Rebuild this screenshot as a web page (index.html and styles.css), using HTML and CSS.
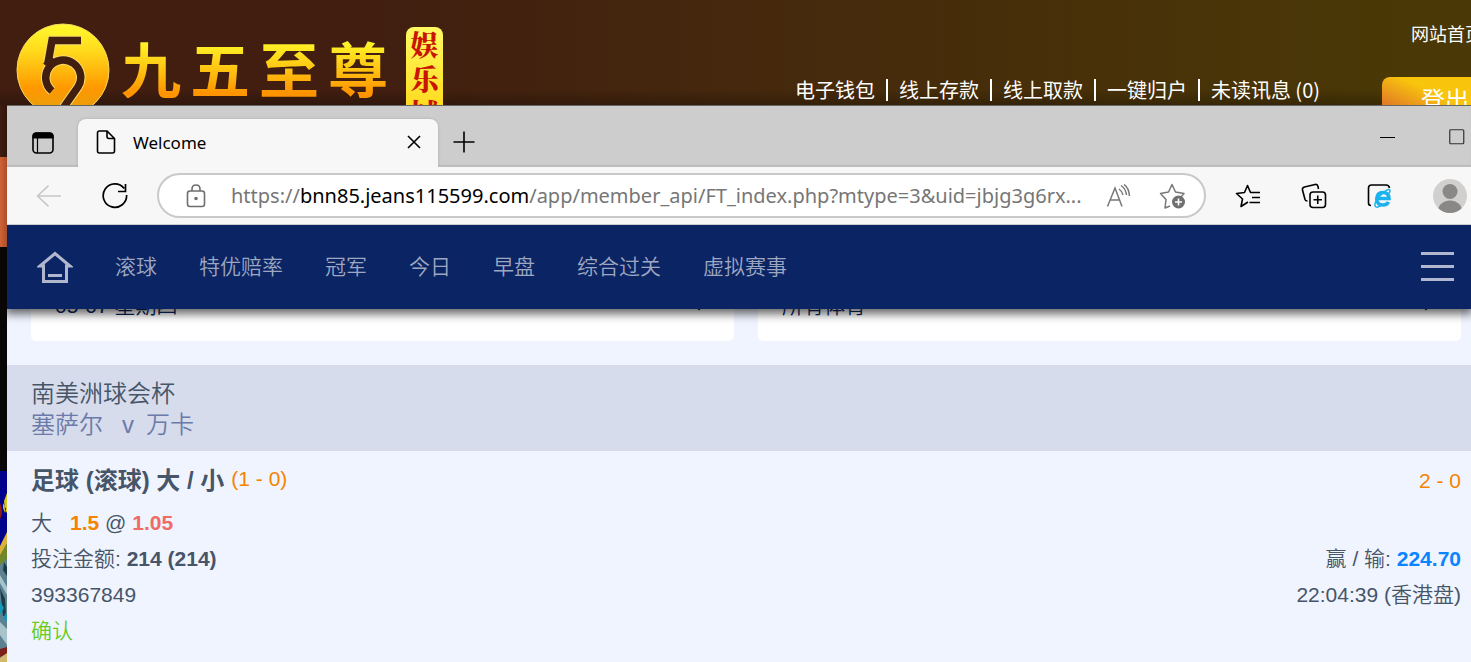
FILE: index.html
```html
<!DOCTYPE html>
<html lang="zh-CN">
<head>
<meta charset="utf-8">
<title>Welcome</title>
<link rel="stylesheet" href="styles.css">
</head>
<body>
<header class="site">
  <div class="brand">
    <svg class="brand-mark" viewBox="0 0 94 94" width="94" height="94" aria-hidden="true">
      <defs><linearGradient id="gold" x1="0" y1="0" x2="0" y2="1"><stop offset="0" stop-color="#fffb2e"/><stop offset=".3" stop-color="#ffd91c"/><stop offset=".7" stop-color="#ff9800"/><stop offset="1" stop-color="#e0a010"/></linearGradient></defs>
      <circle cx="47" cy="47" r="46" fill="url(#gold)" stroke="#f5d860" stroke-width="1"/>
      <g fill="none" stroke="#f9dc6a" stroke-width="9.500"><path d="M65 17.500H36L32 40M36 68A17.500 17.500 0 1 1 62 64L45 88"/></g>
      <g fill="none" stroke="#411e10" stroke-width="7.500"><path d="M65 17.500H36L32 40M36 68A17.500 17.500 0 1 1 62 64L45 88"/><path d="M30 43L37 35"/></g>
    </svg>
    <div class="brand-name"><span>九</span><span>五</span><span>至</span><span>尊</span></div>
    <div class="brand-tag"><span>娱</span><span>乐</span><span>城</span></div>
  </div>
  <nav class="account">
    <a href="#">电子钱包</a><a href="#">线上存款</a><a href="#">线上取款</a><a href="#">一键归户</a><a href="#">未读讯息 (0)</a>
  </nav>
  <div class="exit">
    <a class="home-link" href="#">网站首页</a>
    <button class="logout" type="button">登出</button>
  </div>
</header>
<div class="stage">
  <div class="backdrop" aria-hidden="true">
    <div class="b-dark"></div><div class="b-orange"></div><div class="b-black"></div>
    <svg class="b-art" viewBox="0 0 7 191" preserveAspectRatio="none">
      <path fill="#00008c" d="M0 0h7v191H0z"/>
      <path fill="#d8c81c" d="M7 22L4 30 5 39 7 42zM3 32L6 38 5 42 3 37z"/>
      <path fill="#8a1c18" d="M0 32Q4 42 0 48z"/>
      <path fill="#d9b13c" d="M7 61L0 75V96L7 89z"/>
      <path fill="#72872c" d="M7 72L0 84V96L7 90z"/>
      <path fill="#5c8190" d="M0 94L7 88V191H0z"/>
      <path fill="#a9c3ca" d="M0 104L7 116V124L0 112zM0 151L7 158V174L0 164z"/>
      <path fill="#1c3b49" d="M0 117L5 128 6 145 3 145zM4 91L7 96V105L3 99z"/>
      <path fill="#1596b5" d="M0 130L4 137 0 144zM5 142L7 144V151L4 148z"/>
      <path fill="#7b1f18" d="M0 178L7 176V183L0 186z"/>
      <path fill="#d1b86b" d="M0 187L7 182V191H0z"/>
    </svg>
  </div>
  <main class="window">
    <div class="tabstrip">
      <button class="icon tab-menu" type="button" aria-label="标签页操作"><svg width="22" height="22" viewBox="0 0 22 22"><rect x="1" y="1" width="20" height="20" rx="3.500" fill="none" stroke="#000" stroke-width="1.600"/><path d="M1 6V4Q1 1 4 1H18Q21 1 21 4V6zM5.500 6V21" stroke="#000" stroke-width="1.200"/></svg></button>
      <div class="tab">
        <svg width="20" height="24" viewBox="0 0 20 24" fill="none" stroke="#000" stroke-width="1.600"><path d="M3.500 1H11L18.500 8.500V21Q18.500 23 16.500 23H3.500Q1.500 23 1.500 21V3Q1.500 1 3.500 1zM11 1V6.500Q11 8.500 13 8.500H18.500"/></svg>
        <span class="tab-title">Welcome</span>
        <button class="icon" type="button" aria-label="关闭"><svg width="14" height="14" viewBox="0 0 14 14"><path d="M1 1L13 13M13 1L1 13" stroke="#000" stroke-width="1.600"/></svg></button>
      </div>
      <button class="icon new-tab" type="button" aria-label="新标签页"><svg width="22" height="22" viewBox="0 0 22 22"><path d="M11 .5V21.500M.5 11H21.500" stroke="#000" stroke-width="1.600"/></svg></button>
      <div class="caption">
        <button class="icon" type="button" aria-label="最小化"><svg width="16" height="16" viewBox="0 0 16 16"><path d="M0 8.500H15" stroke="#000"/></svg></button>
        <button class="icon" type="button" aria-label="最大化"><svg width="16" height="16" viewBox="0 0 16 16"><rect x=".75" y=".75" width="14" height="14" rx="1" fill="none" stroke="#333" stroke-width="1.200"/></svg></button>
      </div>
    </div>
    <div class="toolbar">
      <button class="icon" type="button" aria-label="后退" disabled><svg width="25" height="22" viewBox="0 0 25 22"><path d="M12.500 .7L1.500 11L12.500 21.300M1.500 11H25" fill="none" stroke="#c8c8c8" stroke-width="1.600"/></svg></button>
      <button class="icon reload" type="button" aria-label="刷新"><svg width="26" height="26" viewBox="0 0 26 26"><path d="M24.600 12A11.700 11.700 0 1 1 22.200 5.500M23.500 1V8.500H16" fill="none" stroke="#000" stroke-width="1.700"/></svg></button>
      <div class="address">
        <svg width="20" height="24" viewBox="0 0 20 24" fill="none" stroke="#6e6e6e" stroke-width="1.600"><rect x="1.500" y="7" width="17" height="15.500" rx="2.500"/><path d="M6 7V5Q6 1 10 1T14 5V7"/><circle cx="10" cy="14.500" r="1" fill="#6e6e6e"/></svg>
        <div class="url" role="textbox" aria-label="地址">https://<b>bnn85.jeans115599.com</b>/app/member_api/FT_index.php?mtype=3&amp;uid=jbjg3g6rx...</div>
        <button class="icon" type="button" aria-label="朗读"><svg width="26" height="24" viewBox="0 0 26 24" fill="none" stroke="#777" stroke-width="1.500"><path d="M1.500 22.500L9 4L16 22.500M4.500 16H13.500M13 5Q16 7 17 11M15 1.500Q20 5 20.500 11M18 .5Q23 4 23.500 12"/></svg></button>
        <button class="icon fav-add" type="button" aria-label="添加收藏"><svg width="27" height="26" viewBox="0 0 27 26"><path d="M11 23L6 25 7 16.500 1.500 10.500 9.500 9 13 1.500 16.500 9 25 10.500 22 14" fill="none" stroke="#777" stroke-width="1.500" stroke-linejoin="round"/><circle cx="19.500" cy="19" r="6.500" fill="#707070"/><path d="M19.500 15.500V22.500M16 19H23" stroke="#fff" stroke-width="1.600"/></svg></button>
      </div>
      <div class="tools">
        <button class="icon" type="button" aria-label="收藏夹"><svg width="26" height="24" viewBox="0 0 26 24"><path d="M13 18L6 22.500 7.500 15 1.500 9.500 9.500 8.500 12.500 1.500 15.500 8.500H25M17 13.500H25M14.500 18.500H25" fill="none" stroke="#000" stroke-width="1.600" stroke-linejoin="round"/></svg></button>
        <button class="icon" type="button" aria-label="集锦"><svg width="26" height="26" viewBox="0 0 26 26" fill="none" stroke="#000" stroke-width="1.600"><rect x="9" y="9" width="15.500" height="15.500" rx="3"/><path d="M16.750 12.500V21M12.500 16.750H21M17.500 6L17 3.500Q16.500 1 14 1.500L3.500 4Q1 4.700 1.500 7L4 16.500Q4.500 18 6.500 18"/></svg></button>
        <button class="icon" type="button" aria-label="IE 模式"><svg width="26" height="26" viewBox="0 0 26 26" fill="none"><path d="M4 22.500Q1.500 22.500 1.500 20V5Q1.500 2 4.500 2H19Q22 2 22.500 5" stroke="#000" stroke-width="1.600"/><path d="M11 15.500H22Q22 9.500 16 9.500T9.700 16Q10 22 16 22Q20 22 21.500 19" stroke="#1bb2ee" stroke-width="3.600"/><path d="M8 23Q7 20 12 14Q19 6 22 6.500Q24 7 22 10.500M8 22Q8 26 14 22.500" stroke="#1bb2ee" stroke-width="1.500"/></svg></button>
        <button class="icon" type="button" aria-label="个人资料"><svg width="34" height="34" viewBox="0 0 34 34"><defs><clipPath id="face"><circle cx="17" cy="17" r="17"/></clipPath></defs><g clip-path="url(#face)"><path fill="#d2d0ce" d="M0 0h34v34H0z"/><circle cx="17" cy="12.500" r="7.500" fill="#8a8886"/><ellipse cx="17" cy="32" rx="12" ry="10.500" fill="#8a8886"/></g></svg></button>
      </div>
    </div>
    <nav class="menu">
      <a class="home" href="#" aria-label="首页"><svg width="36" height="33" viewBox="0 0 36 33"><path d="M3 15L18 2.500L33 15H29.500V30.500H6.500V15z" fill="none" stroke="#b0b7cf" stroke-width="3"/><path d="M11 24.500H25" stroke="#b0b7cf" stroke-width="3"/></svg></a>
      <a href="#">滚球</a><a href="#">特优赔率</a><a href="#">冠军</a><a href="#">今日</a><a href="#">早盘</a><a href="#">综合过关</a><a href="#">虚拟赛事</a>
      <button class="icon burger" type="button" aria-label="菜单"><svg width="33" height="32" viewBox="0 0 33 32"><path d="M0 2.500H33M0 15.500H33M0 28.500H33" stroke="#b0b7cf" stroke-width="3"/></svg></button>
    </nav>
    <section class="content">
      <div class="filters">
        <label class="filter"><select aria-label="日期"><option>05-07 星期四</option></select><svg width="14" height="12" viewBox="0 0 14 12"><path d="M1 4L7 10L13 4" fill="none" stroke="#0b2463" stroke-width="2"/></svg></label>
        <label class="filter"><select aria-label="体育"><option>所有体育</option></select><svg width="14" height="12" viewBox="0 0 14 12"><path d="M1 4L7 10L13 4" fill="none" stroke="#0b2463" stroke-width="2"/></svg></label>
      </div>
      <div class="match">
        <div>南美洲球会杯</div>
        <div class="teams"><span>塞萨尔</span><span class="versus">v</span><span>万卡</span></div>
      </div>
      <div class="bet">
        <div class="row head"><div class="market"><strong>足球 (滚球) 大 / 小</strong><span class="score">(1 - 0)</span></div><span class="score">2 - 0</span></div>
        <div class="row"><div><span class="pick">大</span><b class="line">1.5</b> @ <b class="odds">1.05</b></div></div>
        <div class="row"><div>投注金额: <b>214 (214)</b></div><div>赢 / 输: <b class="win">224.70</b></div></div>
        <div class="row"><div>393367849</div><div>22:04:39 (香港盘)</div></div>
        <div class="row ok">确认</div>
      </div>
    </section>
  </main>
</div>
</body>
</html>
```
FILE: styles.css
```css
* { box-sizing: border-box; }
body {
  margin: 0;
  min-height: 100vh;
  display: flex;
  flex-direction: column;
  overflow: hidden;
  background: #000;
  font-family: "Liberation Sans", "Noto Sans CJK SC", sans-serif;
}
a { color: inherit; text-decoration: none; }
button, select { font: inherit; border: 0; padding: 0; }
svg { display: block; flex: none; }
.icon { display: grid; place-items: center; background: none; flex: none; }

.site {
  height: 105px;
  display: flex;
  overflow: hidden;
  white-space: nowrap;
  color: #fff;
  background:
    linear-gradient(transparent 85%, rgba(0, 0, 0, .25)),
    linear-gradient(90deg, #411e10 25%, #45280d 50%, #4a3806 95%);
  font-family: "Noto Sans CJK SC", sans-serif;
}
.brand { display: flex; padding-left: 16px; align-items: flex-start; }
.brand-mark { margin-top: 23px; }
.brand-name {
  display: flex;
  gap: 9px;
  margin: 36px 0 0 11px;
  font-size: 60px;
  line-height: 62px;
  font-weight: 700;
}
.brand-name span {
  color: transparent;
  background: linear-gradient(#fff829 8%, #ffc814 50%, #ff9400 92%);
  background-clip: text;
  -webkit-background-clip: text;
}
.brand-tag {
  display: flex;
  flex-direction: column;
  align-items: center;
  width: 37px;
  height: 120px;
  margin: 27px 0 0 18px;
  border-radius: 8px;
  background: linear-gradient(#fffa60, #ffd91c 70%);
  color: #c81400;
  font-family: "Noto Serif CJK SC", "Noto Sans CJK SC", serif;
  font-size: 28px;
  line-height: 34px;
  font-weight: 900;
}
.account { display: flex; margin: 74px 0 0 auto; font-size: 20px; line-height: 30px; }
.account a { display: flex; align-items: center; }
.account a + a::before { content: ""; width: 2px; height: 22px; margin: 0 11px; background: #fff; }
.exit { width: 89px; margin-left: 62px; flex: none; }
.home-link { display: block; margin: 19px 0 0 29px; font-size: 18px; line-height: 28px; }
.logout {
  width: 126px;
  height: 42px;
  margin-top: 30px;
  border-radius: 8px;
  background: linear-gradient(25deg, #d65a32, #f8c40c 50%);
  color: #fff;
  font-size: 24px;
}

.stage { flex: 1; display: flex; min-height: 0; }
.backdrop { width: 7px; flex: none; display: flex; flex-direction: column; }
.b-dark { height: 52px; background: linear-gradient(90deg, #3f1d10, #30160c); }
.b-orange { height: 90px; background: linear-gradient(90deg, #d26236, #a94f2b); }
.b-black { height: 224px; background: #090705; }
.b-art { width: 7px; flex: 1; }
.window { flex: 1; min-width: 0; display: flex; flex-direction: column; background: #f0f4ff; }

.tabstrip {
  display: flex;
  height: 62px;
  background: #cdcdcd;
  border-top: 1px solid #666;
  box-shadow: inset 0 -2px 1px #bdbdbd;
}
.tab-menu { width: 71px; padding-top: 12px; }
.tab {
  display: flex;
  align-items: center;
  width: 360px;
  margin-top: 13px;
  padding: 0 17px 2px 18px;
  border-radius: 8px 8px 0 0;
  background: #f7f7f7;
  box-shadow: 0 0 3px #aaa;
  clip-path: inset(-4px -4px 0 -4px);
  font: 17px "Noto Sans", sans-serif;
}
.tab-title { flex: 1; padding-left: 17px; }
.new-tab { width: 51px; padding-top: 10px; }
.caption { display: flex; gap: 53px; margin: 0 6px 0 auto; }

.toolbar {
  display: flex;
  align-items: center;
  height: 58px;
  padding: 0 4px 0 29px;
  background: #f7f7f7;
  border-bottom: 1px solid #ccc;
}
.reload { margin-left: 41px; }
.address {
  display: flex;
  align-items: center;
  flex: 1;
  min-width: 0;
  height: 45px;
  margin: 0 29px;
  padding: 0 18px 0 27px;
  border: 2px solid #c9c9c9;
  border-radius: 23px;
  background: #fff;
}
.url {
  flex: 1;
  min-width: 0;
  padding-left: 25px;
  overflow: hidden;
  white-space: nowrap;
  color: #767676;
  font: 20px "Noto Sans", sans-serif;
}
.url b { color: #000; font-weight: 400; }
.fav-add { margin-left: 27px; }
.tools { display: flex; align-items: center; gap: 40px; }

.menu {
  position: relative;
  z-index: 1;
  display: flex;
  align-items: center;
  gap: 42px;
  height: 84px;
  padding: 0 17px 0 30px;
  background: #0b2463;
  box-shadow: 0 3px 9px 2px rgba(0, 0, 0, .6);
  clip-path: inset(0 0 -20px 0);
  color: #9ea7c1;
  font-size: 21px;
  font-weight: 350;
  white-space: nowrap;
}
.menu a { padding-bottom: 4px; }
.menu .home { padding: 0; }
.burger { margin-left: auto; }

.content { color: #475568; font-size: 21px; }
.filters { display: flex; gap: 24px; margin-top: -36px; padding: 0 10px 24px 24px; }
.filter {
  flex: 1;
  display: flex;
  align-items: center;
  height: 68px;
  padding: 0 28px 4px 24px;
  border-radius: 5px;
  background: #fff;
}
.filter select { flex: 1; appearance: none; background: none; color: #0b2463; font-weight: 350; }
.match {
  padding: 13px 24px 11px;
  background: #d6dceb;
  font-size: 24px;
  font-weight: 350;
  line-height: 31px;
}
.teams { color: #6b7aa8; }
.versus { margin: 0 12px 0 19px; }
.bet { padding: 12px 10px 12px 24px; font-weight: 350; }
.row { display: flex; justify-content: space-between; line-height: 36px; }
.row b, .row strong { font-weight: 700; }
.head { padding-bottom: 6px; }
.head strong { font-size: 24px; }
.market { display: flex; gap: 7px; }
.market .score { line-height: 32px; }
.score, .line { color: #f68300; }
.pick { margin-right: 18px; }
.odds { color: #ef6b65; }
.win { color: #0a84ff; }
.ok { color: #66cc1e; }
```
